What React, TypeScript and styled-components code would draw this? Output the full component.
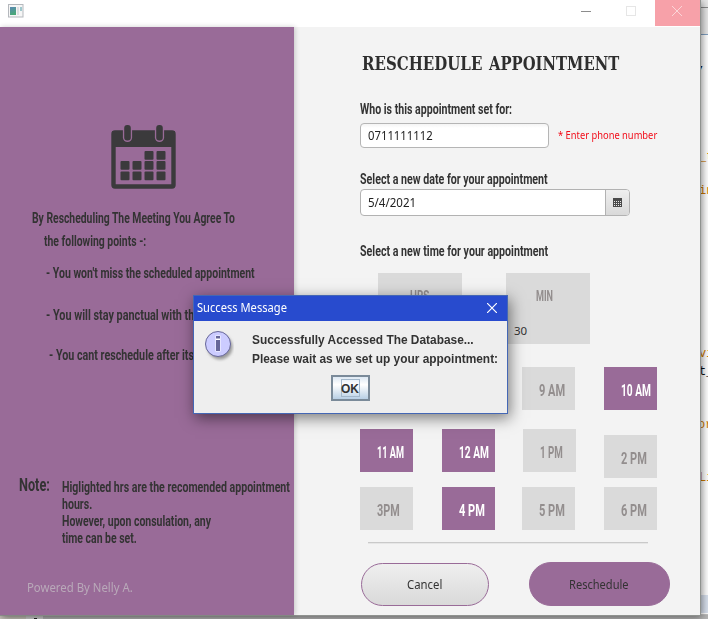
import React, { useLayoutEffect, useRef, useState } from 'react';
import styled, { createGlobalStyle, css } from 'styled-components';

const PURPLE = '#996b98';
const INK = '#333333';
const NARROW = '"Liberation Sans Narrow", "Roboto", "Liberation Sans", sans-serif';
const UI = '"Noto Sans", "Open Sans", sans-serif';

const Global = createGlobalStyle`
  * { box-sizing: border-box; }
  body { margin: 0; overflow: hidden; background: #fff; }
`;

/* Text condensed or widened to an exact run length */
const FitBox = styled.div<{ $w: number; $h: number }>`
  width: ${p => p.$w}px;
  height: ${p => p.$h}px;
  line-height: ${p => p.$h}px;
  white-space: nowrap;
  flex: none;
`;
const FitRun = styled.span`
  display: inline-block;
  transform-origin: 0 50%;
`;
function Fit({ w, h = 20, children, className }: { w: number; h?: number; children: string; className?: string }) {
  const ref = useRef<HTMLSpanElement>(null);
  const [scale, setScale] = useState(1);
  useLayoutEffect(() => {
    if (ref.current) setScale(w / ref.current.offsetWidth);
  }, [w, children]);
  return (
    <FitBox $w={w} $h={h} className={className}>
      <FitRun ref={ref} style={{ transform: `scaleX(${scale})` }}>{children}</FitRun>
    </FitBox>
  );
}

const Desktop = styled.div`
  position: relative;
  display: grid;
  grid-template-columns: 700px 8px;
  grid-template-rows: 615px 4px;
  width: 708px;
  height: 619px;
  overflow: hidden;
`;
const AppWindow = styled.div`
  z-index: 1;
  display: flex;
  flex-direction: column;
  box-shadow: 0 0 0 1px #8f928f, 2px 2px 8px rgba(0, 0, 0, 0.5);
  background: #f3f3f3;
`;
const TitleBar = styled.div`
  display: flex;
  align-items: flex-start;
  height: 27px;
  background: #fff;
`;
const AppIcon = styled.svg`
  margin: 4px 0 0 8px;
`;
const Controls = styled.div`
  display: flex;
  margin-left: auto;
`;
const Control = styled.div<{ $close?: boolean }>`
  display: grid;
  place-items: center;
  width: 45px;
  height: 26px;
  padding: 0 ${p => (p.$close ? 1 : 3)}px 4px 0;
  background: ${p => (p.$close ? '#f7a1a9' : 'transparent')};
`;
const Body = styled.div`
  display: flex;
  height: 588px;
`;
const Side = styled.aside`
  z-index: 1;
  display: flex;
  flex-direction: column;
  width: 294px;
  background: ${PURPLE};
  color: ${INK};
  box-shadow: 1px 0 5px rgba(0, 0, 0, 0.2);
`;
const Calendar = styled.svg`
  margin: 97px 0 0 110px;
  flex: none;
`;
const Label = styled(Fit)<{ $top?: number; $left?: number; $size?: number }>`
  margin: ${p => p.$top ?? 0}px 0 0 ${p => p.$left ?? 0}px;
  font: bold ${p => p.$size ?? 14.5}px ${NARROW};
  line-height: ${p => p.h ?? 20}px;
  color: ${INK};
`;
const NoteRow = styled.div`
  display: flex;
  margin: 105px 0 0 19px;
`;
const NoteLines = styled.div`
  margin: 8px 0 0 12px;
`;
const Powered = styled(Fit)`
  margin: 31px 0 0 27px;
  font: 12px ${UI};
  line-height: 20px;
  color: #b9a9b9;
`;
const Main = styled.main`
  width: 406px;
  padding-left: 66px;
`;
const Heading = styled.h1`
  display: flex;
  gap: 7px;
  margin: 22px 0 0 2px;
  font: bold 19px "DejaVu Serif", "Liberation Serif", serif;
  color: #2e2e2e;
`;
const FieldRow = styled.div`
  display: flex;
  align-items: center;
  margin-top: 3px;
`;
const TextInput = styled.div`
  width: 189px;
  height: 25px;
  padding: 2px 0 0 7px;
  border: 1px solid #b5b5b5;
  border-radius: 4px;
  background: linear-gradient(#f4f4f4, #fff 4px);
  font: 12px ${UI};
  color: #222;
`;
const ErrorText = styled(Fit)`
  margin-left: 9px;
  font: 10px ${UI};
  line-height: 18px;
  color: #f20d1a;
`;
const DateField = styled.div`
  display: flex;
  width: 270px;
  height: 27px;
  margin-top: -1px;
  border: 1px solid #b2b2b2;
  border-radius: 4px;
  background: #fff;
  overflow: hidden;
  font: 12px ${UI};
  color: #222;
`;
const DateValue = styled.div`
  flex: 1;
  padding: 3px 0 0 7px;
`;
const DateButton = styled.div`
  display: grid;
  place-items: center;
  width: 24px;
  border-left: 1px solid #b2b2b2;
  background: linear-gradient(#efefef, #d9d9d9);
`;
const Pickers = styled.div`
  display: flex;
  gap: 44px;
  margin: 11px 0 0 18px;
`;
const Picker = styled.div`
  width: 84px;
  height: 71px;
  padding-top: 13px;
  background: #dadada;
`;
const PickerName = styled(Fit)<{ $left: number }>`
  margin-left: ${p => p.$left}px;
  font: bold 15.5px ${NARROW};
  line-height: 20px;
  color: #938e8e;
`;
const PickerValue = styled.div`
  margin: 16px 0 0 8px;
  font: 11.5px/18px ${UI};
  color: ${INK};
`;
const Hours = styled.div<{ $top: number }>`
  display: grid;
  grid-template-columns: 82px 80px 82px 53px;
  height: 43px;
  margin-top: ${p => p.$top}px;
`;
const Hour = styled.div<{ $on?: boolean; $dx?: number; $dy?: number }>`
  width: 53px;
  height: 43px;
  margin: ${p => p.$dy ?? 0}px 0 0 ${p => p.$dx ?? 0}px;
  padding: 11px 0 0 17px;
  background: ${p => (p.$on ? PURPLE : '#dadada')};
  ${p => css`color: ${p.$on ? '#fff' : '#938e8e'};`}
`;
const HourText = styled(Fit)`
  font: bold 17px ${NARROW};
  line-height: 24px;
`;
const Rule = styled.div`
  width: 280px;
  height: 2px;
  margin: 12px 0 0 8px;
  border-top: 1px solid #c9c9c9;
  border-bottom: 1px solid #e6e6e6;
`;
const Actions = styled.div`
  display: flex;
  align-items: center;
  gap: 40px;
  margin: 18px 0 0 1px;
`;
const Action = styled.div<{ $primary?: boolean }>`
  display: grid;
  place-items: center;
  width: ${p => (p.$primary ? 141 : 128)}px;
  height: ${p => (p.$primary ? 44 : 43)}px;
  padding: 2px 2px 0 0;
  border: 1px solid ${PURPLE};
  border-radius: 22px;
  background: ${p => (p.$primary ? PURPLE : 'linear-gradient(#efefef, #d9d9d9)')};
  font: 12px ${UI};
  color: ${INK};
`;

/* Editor visible behind the window */
const Editor = styled.div`
  height: 615px;
  overflow: hidden;
  background: linear-gradient(#e8e8e8 0 7px, #8a8a8a 7px 8px, #e8e8e8 8px 34px, #7f9fc0 34px 35px, #fff 35px 595px, #d9e1ee 595px 613px, #fff 613px 614px, #c0c0c0 614px);
`;
const Code = styled.div<{ $top: number; $dark?: boolean; $shift?: number }>`
  height: 16px;
  margin: ${p => p.$top}px 0 0 ${p => p.$shift ?? 0}px;
  font: 12px/16px "Liberation Mono", monospace;
  white-space: nowrap;
  color: ${p => (p.$dark ? '#111' : '#ce7b00')};
`;
const Footer = styled.div`
  grid-column: 1 / 3;
  display: flex;
  background: #b4b4b4;
`;
const FooterCell = styled.div<{ $w: number; $c: string }>`
  width: ${p => p.$w}px;
  background: ${p => p.$c};
`;
const Tick = styled.div`
  width: 3px;
  height: 1px;
  margin: 3px 0 0 8px;
  background: #222;
`;

const Dialog = styled.div`
  position: absolute;
  z-index: 2;
  left: 193px;
  top: 295px;
  width: 315px;
  height: 119px;
  border: 1px solid #4467b5;
  background: #eee;
  box-shadow: 2px 4px 14px rgba(0, 0, 0, 0.5);
`;
const DialogBar = styled.div`
  display: flex;
  align-items: center;
  justify-content: space-between;
  height: 25px;
  padding: 0 10px 1px 3px;
  background: #284bce;
  font: 12px ${UI};
  color: #fff;
`;
const DialogContent = styled.div`
  display: flex;
  height: 55px;
  padding: 9px 0 0 10px;
`;
const Message = styled.div`
  margin: 1px 0 0 18px;
  font: bold 12px "Liberation Sans", sans-serif;
  color: ${INK};
`;
const OkButton = styled.div`
  display: grid;
  place-items: center;
  width: 39px;
  height: 26px;
  margin: -1px 0 0 137px;
  border: 2px solid #7a8a99;
  background: linear-gradient(#dde8f3, #fff 35%, #b8cfe5);
`;
const OkFocus = styled.div`
  width: 19px;
  height: 18px;
  border: 1px solid #a3b8cc;
  font: bold 12px/18px "Liberation Sans", sans-serif;
  text-align: center;
  text-indent: -1px;
  color: ${INK};
`;

type HourItem = { label: string; w: number; on?: boolean; dx?: number; dy?: number };
const rows: { top: number; hours: HourItem[] }[] = [
  { top: 23, hours: [{ label: '7 AM', w: 26 }, { label: '8 AM', w: 26 }, { label: '9 AM', w: 26 }, { label: '10 AM', w: 30, on: true }] },
  { top: 19, hours: [{ label: '11 AM', w: 27, on: true }, { label: '12 AM', w: 30, on: true }, { label: '1 PM', w: 23, dx: 1 }, { label: '2 PM', w: 26, dy: 6 }] },
  { top: 15, hours: [{ label: '3PM', w: 23 }, { label: '4 PM', w: 26, on: true }, { label: '5 PM', w: 26 }, { label: '6 PM', w: 26 }] },
];

const daySquares = [
  [144, 151], [156, 151],
  [120, 161], [132, 161], [144, 161], [156, 161],
  [120, 171.5], [132, 171.5], [144, 171.5], [156, 171.5],
];

export default function App() {
  return (
    <>
      <Global />
      <Desktop>
        <AppWindow>
          <TitleBar>
            <AppIcon width="16" height="14" viewBox="0 0 16 14">
              <rect x="0.5" y="0.5" width="14.5" height="12.5" fill="#f6f6f6" stroke="#b5b8bd" />
              <defs><linearGradient id="pane" x2="0.3" y2="1"><stop stopColor="#5a88b4" /><stop offset="1" stopColor="#4aa878" /></linearGradient></defs>
              <rect x="2" y="3" width="6" height="8" fill="url(#pane)" />
              <rect x="9" y="3" width="2" height="8" fill="#dfdfe2" />
              <rect x="12" y="3" width="2" height="4" fill="#9fc8cd" />
            </AppIcon>
            <Controls>
              <Control><svg width="10" height="10"><path d="M0 5.5H10" stroke="#8c8c8c" /></svg></Control>
              <Control><svg width="10" height="10"><rect x=".5" y=".5" width="9" height="9" fill="none" stroke="#e6e6e6" /></svg></Control>
              <Control $close><svg width="10" height="10"><path d="M0 0L10 10M10 0L0 10" stroke="#fbd5d8" /></svg></Control>
            </Controls>
          </TitleBar>
          <Body>
            <Side>
              <Calendar width="67" height="66" viewBox="110 124 67 66">
                <rect x="113.5" y="132.5" width="60" height="54" rx="1.5" fill="none" stroke="#3b3a3c" strokeWidth="4.4" />
                <path d="M112 131H175V147H112Z" fill="#3b3a3c" />
                {[127.5, 159.5].map(x => (
                  <g key={x}>
                    <rect x={x - 4.6} y="122" width="9.2" height="20" rx="4.6" fill={PURPLE} />
                    <rect x={x - 3.3} y="125" width="6.6" height="15.5" rx="3" fill="#3b3a3c" />
                  </g>
                ))}
                {daySquares.map(([x, y]) => <rect key={`${x}-${y}`} x={x + 0.5} y={y} width="9" height="8.8" rx="1" fill="#3b3a3c" />)}
              </Calendar>
              <Label w={203} $top={19} $left={32}>By Rescheduling The Meeting You Agree To</Label>
              <Label w={102} $top={3} $left={44}>the following points -:</Label>
              <Label w={209} $top={12} $left={46}>- You won't miss the scheduled appointment</Label>
              <Label w={154} $top={22} $left={46}>- You will stay panctual with the</Label>
              <Label w={145} $top={20} $left={49}>- You cant reschedule after its</Label>
              <NoteRow>
                <Label w={31} h={28} $size={18}>Note:</Label>
                <NoteLines>
                  <Label w={228} h={17}>Higlighted hrs are the recomended appointment</Label>
                  <Label w={30} h={17}>hours.</Label>
                  <Label w={149} h={17}>However, upon consulation, any</Label>
                  <Label w={75} h={17}>time can be set.</Label>
                </NoteLines>
              </NoteRow>
              <Powered w={106}>Powered By Nelly A.</Powered>
            </Side>
            <Main>
              <Heading>
                <Fit w={120} h={28}>RESCHEDULE</Fit>
                <Fit w={130} h={28}>APPOINTMENT</Fit>
              </Heading>
              <Label w={152} $top={23}>Who is this appointment set for:</Label>
              <FieldRow>
                <TextInput><Fit w={65}>0711111112</Fit></TextInput>
                <ErrorText w={99}>* Enter phone number</ErrorText>
              </FieldRow>
              <Label w={188} $top={22}>Select a new date for your appointment</Label>
              <DateField>
                <DateValue><Fit w={48}>5/4/2021</Fit></DateValue>
                <DateButton>
                  <svg width="9" height="9">
                    <rect width="9" height="9" fill="#4a4a4a" />
                    {[3, 5, 7].map(y => [1, 3, 5, 7].map(x => <rect key={`${x}${y}`} x={x} y={y} width="1" height="1" fill="#e8e8e8" />))}
                  </svg>
                </DateButton>
              </DateField>
              <Label w={188} $top={26}>Select a new time for your appointment</Label>
              <Pickers>
                <Picker><PickerName w={19} $left={32}>HRS</PickerName></Picker>
                <Picker>
                  <PickerName w={17} $left={30}>MIN</PickerName>
                  <PickerValue>30</PickerValue>
                </Picker>
              </Pickers>
              {rows.map(row => (
                <Hours key={row.top} $top={row.top}>
                  {row.hours.map(h => (
                    <Hour key={h.label} $on={h.on} $dx={h.dx} $dy={h.dy}><HourText w={h.w} h={24}>{h.label}</HourText></Hour>
                  ))}
                </Hours>
              ))}
              <Rule />
              <Actions>
                <Action><Fit w={35}>Cancel</Fit></Action>
                <Action $primary><Fit w={60}>Reschedule</Fit></Action>
              </Actions>
            </Main>
          </Body>
        </AppWindow>
        <Editor>
          <Code $top={57} $dark $shift={-2}><b>,</b></Code>
          <Code $top={76} $shift={-1}>_t</Code>
          <Code $top={18} $shift={-1}>in</Code>
          <Code $top={147} $shift={-1}>vi</Code>
          <Code $top={2} $dark $shift={-1}>t_</Code>
          <Code $top={37} $shift={-2}>or</Code>
          <Code $top={37} $shift={-1}>Li</Code>
        </Editor>
        <Footer>
          <FooterCell $w={26} $c="#c8c5bc" />
          <FooterCell $w={17} $c="#d2d2d2"><Tick /></FooterCell>
        </Footer>
        <Dialog>
          <DialogBar>
            <Fit w={90}>Success Message</Fit>
            <svg width="10" height="10"><path d="M0 0L10 10M10 0L0 10" stroke="#fff" strokeWidth="1.2" /></svg>
          </DialogBar>
          <DialogContent>
            <svg width="30" height="32" viewBox="0 0 30 32">
              <defs><filter id="soft"><feGaussianBlur stdDeviation="1.5" /></filter></defs>
              <circle cx="16" cy="17" r="12.5" fill="#999" filter="url(#soft)" />
              <circle cx="14" cy="14" r="12.5" fill="#ccccff" stroke="#666699" />
              <path d="M11.5 5.5H16.5V21.5H11.5Z" fill="#fff" />
              <path d="M12 6H16V8.5H12ZM12 10H16V21H12Z" fill="#666699" />
            </svg>
            <Message>
              <Fit w={222} h={19}>Successfully Accessed The Database...</Fit>
              <Fit w={246} h={19}>Please wait as we set up your appointment:</Fit>
            </Message>
          </DialogContent>
          <OkButton><OkFocus>OK</OkFocus></OkButton>
        </Dialog>
      </Desktop>
    </>
  );
}
